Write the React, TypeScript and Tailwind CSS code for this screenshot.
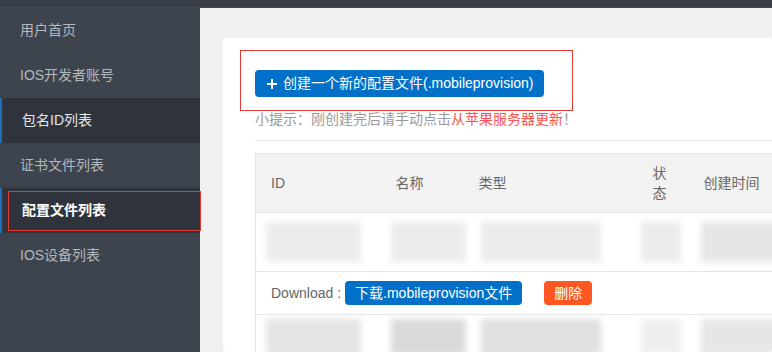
const menu = [
  { label: "用户首页" },
  { label: "IOS开发者账号" },
  { label: "包名ID列表", active: true },
  { label: "证书文件列表" },
  { label: "配置文件列表", active: true, current: true },
  { label: "IOS设备列表" },
];

function Blur({ w, h = "h-[40px]", c = "bg-[#ececec]" }: { w: string; h?: string; c?: string }) {
  return <div className={`${w} ${h} ${c} blur-[3px]`} />;
}

export default function App() {
  return (
    <div
      className="w-[772px] h-[352px] overflow-hidden flex flex-col bg-[#f0f0f0]"
      style={{ fontFamily: '"Liberation Sans", "Noto Sans CJK SC", sans-serif' }}
    >
      <div className="h-2 bg-[#393d46] border-b border-[#454b55] shrink-0" />
      <div className="flex flex-1 min-h-0">
        {/* sidebar */}
        <aside className="w-[200px] shrink-0 bg-[#3e444e]">
          {menu.map((m) => (
            <div
              key={m.label}
              className={`relative h-[45px] flex items-center text-[14px] ${
                m.active
                  ? "bg-[#2f343c] border-l-2 border-[#1e6fb8] pl-5"
                  : "pl-5 text-[#b4b7bc]"
              } ${m.current ? "font-bold text-white" : m.active ? "text-[#e4e6e8]" : ""}`}
            >
              {m.label}
              {m.current && (
                <div className="absolute left-[6px] right-[-1px] top-[3px] bottom-[2px] border border-[#e53935]" />
              )}
            </div>
          ))}
        </aside>

        {/* content */}
        <main className="flex-1 min-w-0 pl-[23px] pt-[30px]">
          <div className="relative bg-white rounded h-full pl-8 pt-8 overflow-hidden">
            <div className="absolute left-[17px] top-[12px] w-[333px] h-[61px] border border-[#e53935]" />
            <button className="h-[27px] w-[289px] rounded-sm bg-[#0070c8] text-white text-[14px] flex items-center pl-3 gap-[6px]">
              <svg width="10" height="10" viewBox="0 0 10 10">
                <path d="M5 0v10M0 5h10" stroke="white" strokeWidth="2" />
              </svg>
              创建一个新的配置文件(.mobileprovision)
            </button>
            <p className="mt-3 text-[14px] leading-5 text-[#999]">
              小提示：刚创建完后请手动点击<span className="text-[#ff5252]">从苹果服务器更新</span>！
            </p>
            <div className="mt-[11px] border-t border-[#e6e6e6]" />

            <table className="mt-[12px] table-fixed border-collapse border border-[#e6e6e6] w-[700px] text-[14px] text-[#666]">
              <colgroup>
                <col className="w-[125px]" />
                <col className="w-[83px]" />
                <col className="w-[174px]" />
                <col className="w-[51px]" />
                <col className="w-[267px]" />
              </colgroup>
              <thead>
                <tr className="bg-[#f2f2f2] leading-5 text-left">
                  <th className="font-normal px-[15px] py-[9px]">ID</th>
                  <th className="font-normal px-[15px] py-[9px]">名称</th>
                  <th className="font-normal px-[15px] py-[9px]">类型</th>
                  <th className="font-normal px-[15px] py-[9px]">状态</th>
                  <th className="font-normal px-[15px] py-[9px]">创建时间</th>
                </tr>
              </thead>
              <tbody>
                <tr className="border-t border-[#e6e6e6]">
                  <td className="px-[10px] py-[9px]"><Blur w="w-[95px]" /></td>
                  <td className="px-[10px] py-[9px]"><Blur w="w-[75px]" /></td>
                  <td className="px-[17px] py-[9px]"><Blur w="w-[120px]" /></td>
                  <td className="px-[3px] py-[9px]"><Blur w="w-[40px]" /></td>
                  <td className="px-[12px] py-[9px]"><Blur w="w-[80px]" c="bg-[#e6e6e6]" /></td>
                </tr>
                <tr className="border-t border-[#e6e6e6]">
                  <td colSpan={5} className="px-[15px] py-[9px]">
                    <div className="flex items-center">
                      <span className="mr-1">Download :</span>
                      <button className="h-6 px-[10px] rounded-sm bg-[#0070c8] text-white text-[14px]">
                        下载.mobileprovision文件
                      </button>
                      <button className="ml-[22px] h-6 px-[10px] rounded-sm bg-[#ff5722] text-white text-[14px]">
                        删除
                      </button>
                    </div>
                  </td>
                </tr>
                <tr className="border-t border-[#e6e6e6]">
                  <td className="px-[10px] py-[4px]"><Blur w="w-[95px]" h="h-[36px]" c="bg-[#e4e4e4]" /></td>
                  <td className="px-[10px] py-[4px]"><Blur w="w-[75px]" h="h-[36px]" c="bg-[#dadada]" /></td>
                  <td className="px-[17px] py-[4px]"><Blur w="w-[120px]" h="h-[36px]" c="bg-[#e0e0e0]" /></td>
                  <td className="px-[3px] py-[4px]"><Blur w="w-[40px]" h="h-[36px]" c="bg-[#efefef]" /></td>
                  <td className="px-[12px] py-[4px]"><Blur w="w-[80px]" h="h-[36px]" c="bg-[#e6e6e6]" /></td>
                </tr>
              </tbody>
            </table>
          </div>
        </main>
      </div>
    </div>
  );
}
